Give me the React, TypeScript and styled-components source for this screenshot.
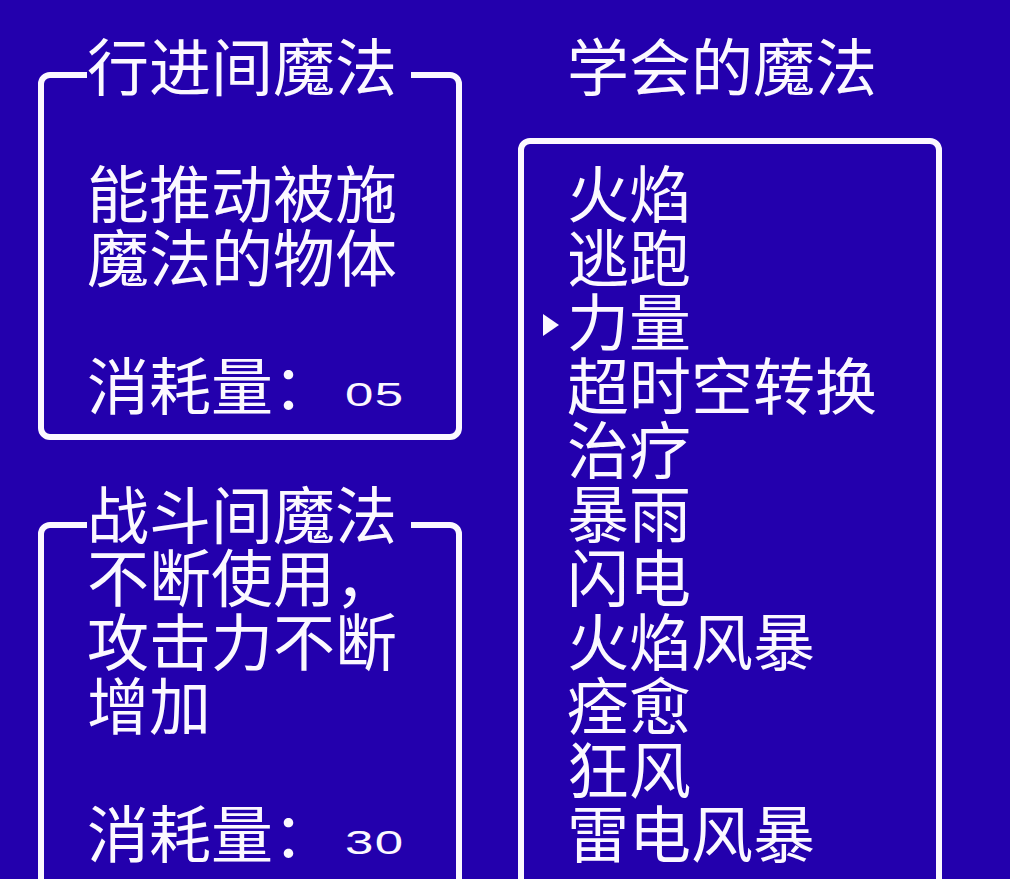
import styled, { createGlobalStyle } from 'styled-components'

const BLUE = '#2300ad'
const INK = '#fbf8ff'

const Global = createGlobalStyle`
  html, body {
    margin: 0;
    background: ${BLUE};
  }
  body {
    width: 1010px;
    height: 879px;
    overflow: hidden;
    color: ${INK};
    font-family: "Noto Sans CJK SC", "Noto Sans", sans-serif;
  }
`

const Screen = styled.div`
  display: flex;
  gap: 56px;
  padding-left: 38px;
  height: 879px;
  overflow: hidden;
  box-sizing: border-box;
`

const LeftColumn = styled.div`
  display: flex;
  flex-direction: column;
  gap: 82px;
  width: 424px;
  padding-top: 72px;
`

const RightColumn = styled.div`
  display: flex;
  flex-direction: column;
  width: 424px;
`

const Panel = styled.div<{ $height: number; $padTop: number; $padLeft: number }>`
  position: relative;
  flex-shrink: 0;
  box-sizing: border-box;
  height: ${(p) => p.$height}px;
  border: 6px solid ${INK};
  border-radius: 12px;
  padding: ${(p) => p.$padTop}px 0 0 ${(p) => p.$padLeft}px;
`

const ListPanel = styled(Panel)`
  margin-top: 42px;
`

// title label sitting on top of the frame line
const PanelTitle = styled.div<{ $top: number }>`
  position: absolute;
  top: ${(p) => p.$top}px;
  left: 43px;
  padding-right: 14px;
  background: ${BLUE};
  font-size: 62px;
  line-height: 64px;
  white-space: nowrap;
`

const Heading = styled.div`
  margin-top: 32px;
  padding-left: 49px;
  font-size: 62px;
  line-height: 64px;
  white-space: nowrap;
`

const Line = styled.div`
  height: 64px;
  font-size: 62px;
  line-height: 64px;
  white-space: pre;
`

const Num = styled.span`
  display: inline-block;
  margin-left: 10px;
  vertical-align: 4px;
  font-family: "Liberation Sans", Arial, sans-serif;
  font-weight: normal;
  font-size: 34px;
  line-height: 34px;
  letter-spacing: 1px;
  transform: scaleX(1.5);
  transform-origin: left center;
`

const SpellRow = styled.div`
  display: flex;
  align-items: center;
  height: 64px;
  font-size: 62px;
  line-height: 64px;
  white-space: nowrap;
`

const Gutter = styled.div`
  display: flex;
  align-items: center;
  width: 24px;
  height: 64px;
  flex-shrink: 0;
`

const Cursor = styled.span`
  width: 0;
  height: 0;
  margin-top: 11px;
  border-left: 16px solid ${INK};
  border-top: 11px solid transparent;
  border-bottom: 11px solid transparent;
`

const spells = [
  '火焰',
  '逃跑',
  '力量',
  '超时空转换',
  '治疗',
  '暴雨',
  '闪电',
  '火焰风暴',
  '痊愈',
  '狂风',
  '雷电风暴',
]

const selected = 2

const Cost = ({ value }: { value: string }) => (
  <Line>
    消耗量：<Num>{value}</Num>
  </Line>
)

export default function App() {
  return (
    <>
      <Global />
      <Screen>
        <LeftColumn>
          <Panel $height={368} $padTop={81} $padLeft={43}>
            <PanelTitle $top={-46}>行进间魔法</PanelTitle>
            <Line>能推动被施</Line>
            <Line>魔法的物体</Line>
            <Line />
            <Cost value='05' />
          </Panel>

          <Panel $height={420} $padTop={15} $padLeft={43}>
            <PanelTitle $top={-48}>战斗间魔法</PanelTitle>
            <Line>不断使用，</Line>
            <Line>攻击力不断</Line>
            <Line>增加</Line>
            <Line />
            <Cost value='30' />
          </Panel>
        </LeftColumn>

        <RightColumn>
          <Heading>学会的魔法</Heading>
          <ListPanel $height={800} $padTop={15} $padLeft={19}>
            {spells.map((name, i) => (
              <SpellRow key={name}>
                <Gutter>{i === selected && <Cursor />}</Gutter>
                {name}
              </SpellRow>
            ))}
          </ListPanel>
        </RightColumn>
      </Screen>
    </>
  )
}
